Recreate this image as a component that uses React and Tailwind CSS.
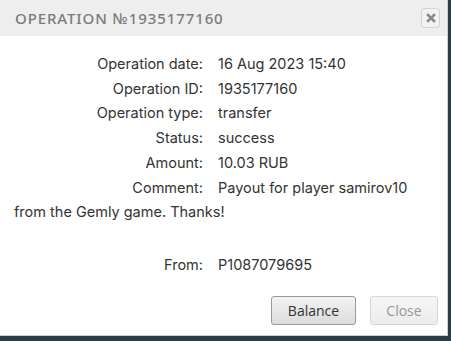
import React from "react";

const rows = [
  ["Operation date:", "16 Aug 2023 15:40"],
  ["Operation ID:", "1935177160"],
  ["Operation type:", "transfer"],
  ["Status:", "success"],
  ["Amount:", "10.03 RUB"],
];

function Row({ label, children }) {
  return (
    <div className="leading-[24.7px]">
      <span className="inline-block w-[189px] text-right mr-[15px]">{label}</span>
      {children}
    </div>
  );
}

export default function App() {
  return (
    <div className="w-[451px] h-[341px] bg-[#2e3d45] overflow-hidden">
      <div className="w-[448px] h-[336px] bg-white border-r border-b border-[#cfcfcf] flex flex-col">
        <div className="h-[36px] bg-[#eeeeee] flex items-center justify-between pl-[15px] pr-[7px]">
          <span
            className="text-[15px] tracking-[0.9px] text-[#7b7b7b] font-medium uppercase"
            style={{ fontFamily: '"Noto Sans", sans-serif' }}
          >
            Operation №1935177160
          </span>
          <button className="w-[19px] h-[20px] border border-[#d4d4d4] rounded-[3px] bg-[#f2f2f2] flex items-center justify-center">
            <svg width="10" height="10" viewBox="0 0 10 10">
              <path d="M2 2 L8 8 M8 2 L2 8" stroke="#8a8a8a" strokeWidth="2.6" strokeLinecap="square" />
            </svg>
          </button>
        </div>
        <div
          className="px-[14px] pt-[16px] text-[14.5px] text-[#333]"
          style={{ fontFamily: "Inter, sans-serif" }}
        >
          {rows.map(([l, v]) => (
            <Row key={l} label={l}>
              {v}
            </Row>
          ))}
          <Row label="Comment:">
            Payout for player samirov10
            <br />
            from the Gemly game. Thanks!
          </Row>
          <div className="h-[28px]" />
          <Row label="From:">P1087079695</Row>
        </div>
        <div
          className="mt-auto mb-[10px] flex justify-end gap-[14px] pr-[9px] text-[14px]"
          style={{ fontFamily: '"Open Sans", sans-serif' }}
        >
          <button className="w-[85px] h-[29px] rounded-[3px] border border-[#9a9a9a] bg-gradient-to-b from-[#f2f2f2] to-[#dcdcdc] text-[#333]">
            Balance
          </button>
          <button className="w-[68px] h-[29px] rounded-[3px] border border-[#d6d6d6] bg-gradient-to-b from-[#f6f6f6] to-[#ececec] text-[#999]">
            Close
          </button>
        </div>
      </div>
    </div>
  );
}
